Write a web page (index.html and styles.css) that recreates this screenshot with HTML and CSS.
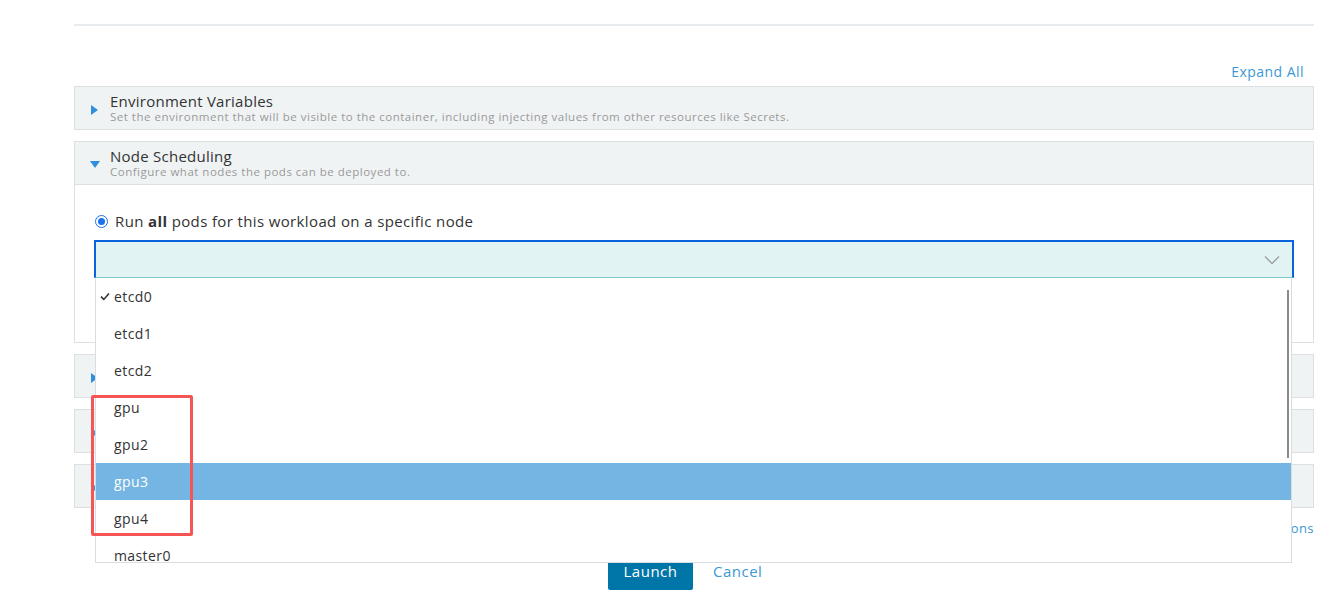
FILE: index.html
```html
<!DOCTYPE html>
<html>
<head>
<meta charset="utf-8">
<link rel="stylesheet" href="styles.css">
</head>
<body>
<div class="page">
  <div class="top-rule"></div>
  <div class="expand-row"><a class="link">Expand All</a></div>

  <div class="section">
    <div class="section-head">
      <span class="tri tri-right"></span>
      <div class="head-text">
        <div class="title">Environment Variables</div>
        <div class="subtitle">Set the environment that will be visible to the container, including injecting values from other resources like Secrets.</div>
      </div>
    </div>
  </div>

  <div class="section">
    <div class="section-head open">
      <span class="tri tri-down"></span>
      <div class="head-text">
        <div class="title">Node Scheduling</div>
        <div class="subtitle">Configure what nodes the pods can be deployed to.</div>
      </div>
    </div>
    <div class="section-body">
      <label class="radio-row">
        <span class="radio"><span class="radio-dot"></span></span>
        <span>Run <b>all</b> pods for this workload on a specific node</span>
      </label>
      <div class="select-wrap">
        <div class="select">
          <svg class="chevron" width="16" height="10" viewBox="0 0 16 10"><path d="M1 1.5 L8 8.5 L15 1.5" fill="none" stroke="#9aa0a3" stroke-width="1.3"/></svg>
        </div>
        <div class="dropdown">
          <div class="opt"><svg class="check" width="10" height="9" viewBox="0 0 10 9"><path d="M1 4.6 L3.8 7.4 L9 1.4" fill="none" stroke="#333" stroke-width="1.6"/></svg>etcd0</div>
          <div class="opt">etcd1</div>
          <div class="opt">etcd2</div>
          <div class="opt">gpu</div>
          <div class="opt">gpu2</div>
          <div class="opt active">gpu3</div>
          <div class="opt">gpu4</div>
          <div class="opt">master0</div>
          <div class="scrollbar"></div>
        </div>
        <div class="highlight-box"></div>
      </div>
    </div>
  </div>

  <div class="section covered">
    <div class="section-head">
      <span class="tri tri-right"></span>
      <div class="head-text">
        <div class="title">Health Check</div>
        <div class="subtitle">Periodically make a request to the container to see if it is alive.</div>
      </div>
    </div>
  </div>
  <div class="section covered">
    <div class="section-head">
      <span class="tri tri-right"></span>
      <div class="head-text">
        <div class="title">Volumes</div>
        <div class="subtitle">Persist and share data separate from the lifecycle of a container.</div>
      </div>
    </div>
  </div>
  <div class="section covered">
    <div class="section-head">
      <span class="tri tri-right"></span>
      <div class="head-text">
        <div class="title">Scaling/Upgrade Policy</div>
        <div class="subtitle">Configure what happens when the workload is upgraded.</div>
      </div>
    </div>
  </div>

  <div class="advanced-row"><a class="link small">Show advanced options</a></div>

  <div class="actions">
    <button class="btn-primary">Launch</button>
    <a class="link cancel">Cancel</a>
  </div>
</div>
</body>
</html>
```

FILE: styles.css
```css
html, body {
  margin: 0;
  padding: 0;
  background: #ffffff;
}
body {
  font-family: "Open Sans", "Noto Sans", sans-serif;
  color: #333333;
  width: 1330px;
  height: 601px;
  overflow: hidden;
}
.page {
  padding: 0 16px 0 74px;
  width: 1240px;
}
.top-rule {
  margin-top: 24px;
  height: 2px;
  background: #e9ecee;
}
.expand-row {
  display: flex;
  justify-content: flex-end;
  padding-right: 10px;
  margin-top: 36px;
  margin-bottom: 4px;
  line-height: 20px;
}
.link {
  color: #3d98d3;
  font-size: 14px;
  letter-spacing: 0.45px;
  cursor: pointer;
}
.link.small {
  font-size: 13px;
}
.section {
  border: 1px solid #dce0e3;
  margin-bottom: 11px;
}
.section-head {
  display: flex;
  align-items: center;
  background: #f0f3f4;
  height: 42px;
  padding-left: 15px;
  box-sizing: border-box;
}
.section-head.open {
  border-bottom: 1px solid #dce0e3;
  height: 43px;
}
.tri {
  width: 20px;
  flex: none;
  display: flex;
  align-items: center;
  margin-top: 3px;
}
.tri::before {
  content: "";
  display: block;
  width: 0;
  height: 0;
}
.tri-right::before {
  border-top: 5px solid transparent;
  border-bottom: 5px solid transparent;
  border-left: 7px solid #2f8fdc;
  margin-left: 1px;
}
.tri-down::before {
  border-left: 5px solid transparent;
  border-right: 5px solid transparent;
  border-top: 7px solid #2f8fdc;
}
.head-text {
  display: flex;
  flex-direction: column;
  white-space: nowrap;
}
.title {
  font-size: 15px;
  line-height: 18px;
  letter-spacing: 0.25px;
  color: #333;
}
.subtitle {
  font-size: 11.5px;
  line-height: 14px;
  letter-spacing: 0.5px;
  color: #9a9a9a;
}
.section-body {
  background: #fff;
  padding: 26px 19px 64px 19px;
}
.radio-row {
  display: flex;
  align-items: center;
  font-size: 15px;
  line-height: 20px;
  letter-spacing: 0.37px;
  color: #333;
  padding-left: 1px;
}
.radio-row b {
  font-weight: 700;
}
.radio {
  width: 13px;
  height: 13px;
  border: 1.5px solid #1a73e8;
  border-radius: 50%;
  box-sizing: border-box;
  display: flex;
  align-items: center;
  justify-content: center;
  margin-right: 7px;
  flex: none;
}
.radio-dot {
  width: 7px;
  height: 7px;
  border-radius: 50%;
  background: #1a73e8;
}
.select-wrap {
  position: relative;
  margin-top: 9px;
}
.select {
  height: 38px;
  box-sizing: border-box;
  background: #e2f3f3;
  border: 2px solid #0a62dc;
  border-bottom: 1px solid #80c5ca;
  display: flex;
  align-items: center;
  justify-content: flex-end;
  padding-right: 12px;
}
.chevron {
  display: block;
  margin-top: 1px;
}
.dropdown {
  position: absolute;
  top: 38px;
  left: 1px;
  width: 1197px;
  height: 285px;
  box-sizing: border-box;
  background: #fff;
  border: 1px solid #d7dde0;
  border-top: none;
  overflow: hidden;
  z-index: 10;
}
.opt {
  height: 37px;
  line-height: 37px;
  font-size: 14px;
  letter-spacing: 0.4px;
  color: #333;
  padding-left: 18px;
  position: relative;
}
.opt.active {
  background: #74b5e3;
  color: #ffffff;
}
.check {
  position: absolute;
  left: 4px;
  top: 14px;
}
.scrollbar {
  position: absolute;
  left: 1191px;
  top: 12px;
  width: 2px;
  height: 168px;
  background: #8a8a8a;
}
.highlight-box {
  position: absolute;
  left: -3px;
  top: 155px;
  width: 102px;
  height: 141px;
  box-sizing: border-box;
  border: 3px solid #f55555;
  border-radius: 2px;
  z-index: 20;
}
.covered .title,
.covered .subtitle {
  visibility: hidden;
}
.advanced-row {
  display: flex;
  justify-content: flex-end;
  line-height: 18px;
  margin-top: 7px;
}
.actions {
  display: flex;
  align-items: center;
  margin-top: 15px;
  padding-left: 534px;
  gap: 20px;
}
.btn-primary {
  height: 38px;
  width: 85px;
  border: none;
  border-radius: 2px;
  background: #0075a8;
  color: #fff;
  font-family: inherit;
  font-size: 15px;
  letter-spacing: 0.5px;
  padding: 0;
}
.cancel {
  font-size: 15px;
  letter-spacing: 0.5px;
}
```
